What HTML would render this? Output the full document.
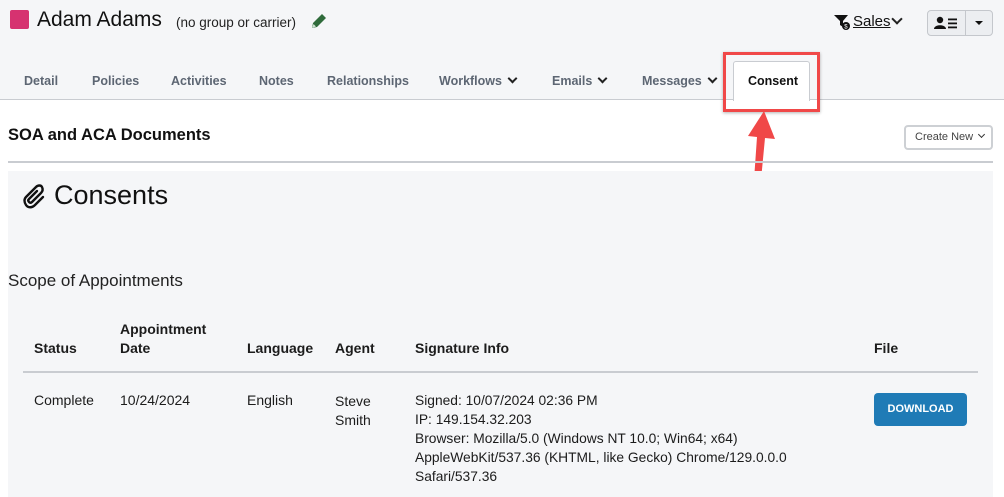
<!DOCTYPE html>
<html><head><meta charset="utf-8"><style>
*{margin:0;padding:0;box-sizing:border-box}
body{width:1004px;height:497px;overflow:hidden;background:#fff;font-family:"Liberation Sans",Arial,sans-serif;color:#1c1c1c;position:relative}
.a{position:absolute;white-space:nowrap}
.hdr{position:absolute;left:0;top:0;width:1004px;height:100px;background:#f5f6f8;border-bottom:1px solid #c9ccd1}
.tab{position:absolute;top:74px;font-size:12.5px;font-weight:bold;color:#5d6673}
.chev{display:inline-block;width:7px;height:7px;border-right:2px solid #222;border-bottom:2px solid #222;transform:rotate(45deg);margin-left:7px;position:relative;top:-3px}
</style></head><body>
<div class="hdr"></div>
<div class="a" style="left:10px;top:10px;width:19px;height:19px;background:#d63270;border-radius:2px"></div>
<div class="a" style="left:37px;top:8px;font-size:21px;color:#111">Adam Adams</div>
<div class="a" style="left:176px;top:15px;font-size:13.5px;color:#222">(no group or carrier)</div>
<svg class="a" style="left:309px;top:11px" width="20" height="20" viewBox="0 0 20 20"><path d="M3 17l1-5L13 3l4 4-9 9z" fill="#2f6b3b"/><path d="M3 17l1.5-4 2.5 2.5z" fill="#cfe3d3"/></svg>
<svg class="a" style="left:834px;top:14px" width="16" height="16" viewBox="0 0 16 16"><path d="M0 1h14L9 7v6L6 11V7z" fill="#111"/><circle cx="12" cy="12" r="4" fill="#111"/><text x="10.3" y="14.5" font-size="6" fill="#fff" font-family="Liberation Sans">$</text></svg>
<div class="a" style="left:853px;top:13px;font-size:15px;text-decoration:underline;color:#111">Sales</div>
<div class="a" style="left:893px;top:15px;width:8px;height:8px;border-right:2px solid #222;border-bottom:2px solid #222;transform:rotate(45deg)"></div>
<div class="a" style="left:927px;top:10px;width:66px;height:26px;border:1px solid #c4c7cc;border-radius:4px;background:#eceef1"></div>
<div class="a" style="left:965px;top:10px;width:1px;height:26px;background:#c4c7cc"></div>
<svg class="a" style="left:934px;top:16px" width="26" height="14" viewBox="0 0 26 14"><circle cx="6" cy="4" r="3.2" fill="#111"/><path d="M0 13c0-5 12-5 12 0z" fill="#111"/><rect x="14" y="2.5" width="9" height="1.8" fill="#111"/><rect x="14" y="6.5" width="9" height="1.8" fill="#111"/><rect x="14" y="10.5" width="9" height="1.8" fill="#111"/></svg>
<div class="a" style="left:975px;top:21px;border-left:4px solid transparent;border-right:4px solid transparent;border-top:4px solid #111"></div>

<div class="tab" style="left:24px">Detail</div>
<div class="tab" style="left:92px">Policies</div>
<div class="tab" style="left:171px">Activities</div>
<div class="tab" style="left:259px">Notes</div>
<div class="tab" style="left:327px">Relationships</div>
<div class="tab" style="left:439px">Workflows<span class="chev"></span></div>
<div class="tab" style="left:552px">Emails<span class="chev"></span></div>
<div class="tab" style="left:642px">Messages<span class="chev"></span></div>
<div class="a" style="left:733px;top:61px;width:77px;height:40px;background:#fff;border:1px solid #c9ccd1;border-bottom:none;border-radius:3px 3px 0 0"></div>
<div class="tab" style="left:748px;color:#111">Consent</div>
<div class="a" style="left:723px;top:52px;width:97px;height:60px;border:3px solid #f04848;box-shadow:0 1px 3px rgba(0,0,0,.3)"></div>
<svg class="a" style="left:740px;top:108px" width="45" height="78" viewBox="0 0 45 78"><path d="M24 3L8 28l9 1-3 43c0 4 6 4 7 0l4-42 10 1z" fill="#f04848"/></svg>

<div class="a" style="left:8px;top:126px;font-size:16.5px;font-weight:bold;color:#111">SOA and ACA Documents</div>
<div class="a" style="left:904px;top:125px;width:89px;height:25px;border:2px solid #cdd0d4;border-radius:4px;font-size:11px;color:#444;padding:4px 0 0 9px">Create New<span class="chev" style="width:5px;height:5px;border-width:1.5px;margin-left:6px;border-color:#333"></span></div>
<div class="a" style="left:8px;top:161px;width:985px;height:2px;background:#c9ccd1"></div>
<div class="a" style="left:8px;top:171px;width:985px;height:326px;background:#f5f6f8"></div>
<svg class="a" style="left:22px;top:182px" width="26" height="28" viewBox="0 0 26 28"><path d="M21 15l-8 8c-3 3-7 3-9 0s-2-6 0-8L14 5c2-2 5-2 6 0s1 4-1 6l-9 9c-1 1-2 1-3 0s-1-2 0-3l8-8" fill="none" stroke="#111" stroke-width="2.4" stroke-linecap="round"/></svg>
<div class="a" style="left:54px;top:180px;font-size:27px;color:#111">Consents</div>
<div class="a" style="left:8px;top:271px;font-size:17px;color:#222">Scope of Appointments</div>
<div class="a" style="left:34px;top:340px;font-size:14px;font-weight:bold">Status</div>
<div class="a" style="left:120px;top:320px;font-size:14px;font-weight:bold;line-height:19px">Appointment<br>Date</div>
<div class="a" style="left:247px;top:340px;font-size:14px;font-weight:bold">Language</div>
<div class="a" style="left:335px;top:340px;font-size:14px;font-weight:bold">Agent</div>
<div class="a" style="left:415px;top:340px;font-size:14px;font-weight:bold">Signature Info</div>
<div class="a" style="left:874px;top:340px;font-size:14px;font-weight:bold">File</div>
<div class="a" style="left:23px;top:371px;width:955px;height:2px;background:#c9ccd1"></div>
<div class="a" style="left:34px;top:392px;font-size:14px">Complete</div>
<div class="a" style="left:120px;top:392px;font-size:14px">10/24/2024</div>
<div class="a" style="left:247px;top:392px;font-size:14px">English</div>
<div class="a" style="left:335px;top:392px;font-size:14px;line-height:19px">Steve<br>Smith</div>
<div class="a" style="left:415px;top:391px;font-size:13.8px;line-height:19px">Signed: 10/07/2024 02:36 PM<br>IP: 149.154.32.203<br>Browser: Mozilla/5.0 (Windows NT 10.0; Win64; x64)<br>AppleWebKit/537.36 (KHTML, like Gecko) Chrome/129.0.0.0<br>Safari/537.36</div>
<div class="a" style="left:874px;top:393px;width:93px;height:33px;background:#1f7bb6;border-radius:4px;color:#fff;font-size:11px;font-weight:bold;text-align:center;line-height:33px">DOWNLOAD</div>
</body></html>
